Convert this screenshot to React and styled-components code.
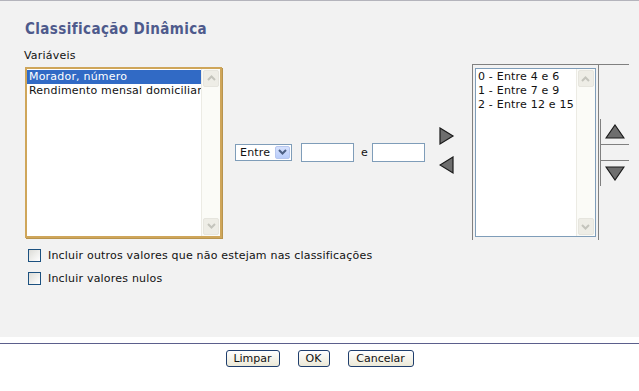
import styled, { createGlobalStyle } from "styled-components";

const GlobalStyle = createGlobalStyle`
  html, body {
    margin: 0;
    padding: 0;
    background: #ffffff;
  }
  body {
    font-family: "DejaVu Sans", Verdana, sans-serif;
    font-size: 11px;
    letter-spacing: 0.2px;
    color: #111;
  }
`;

const Page = styled.div`
  width: 639px;
  height: 391px;
  display: flex;
  flex-direction: column;
`;

const Form = styled.div`
  height: 337px;
  box-sizing: border-box;
  background: #f2f2f2;
  border-top: 1px solid #b4b4bc;
  padding: 18px 0 0 24px;
`;

const Title = styled.h1`
  margin: 0 0 0 1px;
  font-family: "DejaVu Sans Condensed", "DejaVu Sans", sans-serif;
  font-size: 15px;
  line-height: 20px;
  font-weight: bold;
  color: #4e5a8c;
  letter-spacing: 0.4px;
`;

const Label = styled.div`
  margin-top: 10px;
  line-height: 14px;
`;

const Row = styled.div`
  display: flex;
  align-items: center;
  margin-top: 1px;
`;

const ListBox = styled.div`
  display: flex;
  box-sizing: border-box;
  width: ${(p) => p.$w}px;
  height: ${(p) => p.$h}px;
  background: #fff;
  border: ${(p) => (p.$gold ? "2px solid #cfa65a" : "1px solid #7f9db9")};
  box-shadow: ${(p) => (p.$gold ? "1px 1px 0 #b8944e" : "none")};
`;

const Options = styled.div`
  flex: 1;
  padding-top: 1px;
  overflow: hidden;
`;

const Option = styled.div`
  line-height: 14px;
  padding-left: 2px;
  white-space: nowrap;
  background: ${(p) => (p.$selected ? "#316ac5" : "transparent")};
  color: ${(p) => (p.$selected ? "#fff" : "#111")};
`;

const ScrollTrack = styled.div`
  width: 16px;
  display: flex;
  flex-direction: column;
  justify-content: space-between;
  background: #fbfbf7;
  border-left: 1px solid #ecebe4;
  padding: 1px;
`;

const ScrollBtn = styled.div`
  height: 15px;
  border: 1px solid #e6e5de;
  border-radius: 2px;
  background: #eeede6;
  display: flex;
  align-items: center;
  justify-content: center;
`;

const Middle = styled.div`
  display: flex;
  align-items: center;
  margin-left: 13px;
`;

const Select = styled.div`
  display: flex;
  align-items: center;
  box-sizing: border-box;
  width: 57px;
  height: 17px;
  border: 1px solid #7f9db9;
  background: #fff;
  padding-left: 4px;
  justify-content: space-between;
`;

const SelectBtn = styled.div`
  width: 15px;
  height: 13px;
  margin-right: 1px;
  box-sizing: border-box;
  border: 1px solid #b7c7ef;
  border-radius: 2px;
  background: linear-gradient(#d6e1fd, #b9cdfa);
  display: flex;
  align-items: center;
  justify-content: center;
`;

const Input = styled.div`
  box-sizing: border-box;
  width: 53px;
  height: 19px;
  border: 1px solid #7f9db9;
  background: #fff;
  margin-left: ${(p) => p.$ml}px;
`;

const And = styled.span`
  margin-left: 7px;
`;

const Arrows = styled.div`
  display: flex;
  flex-direction: column;
  gap: 10px;
  margin-left: 14px;
  margin-bottom: 3px;
`;

const Frame = styled.div`
  display: flex;
  box-sizing: border-box;
  width: 157px;
  height: 176px;
  margin-left: 17px;
  border-top: 1px solid #808080;
  border-left: 1px solid #808080;
`;

const FrameCell = styled.div`
  border-right: 1px solid #808080;
  padding: 3px 2px 2px 2px;
`;

const OrderCol = styled.div`
  flex: 1;
  display: flex;
  align-items: center;
  padding-left: 1px;
`;

const OrderBox = styled.div`
  flex: 1;
  border-left: 1px solid #808080;
  display: flex;
  flex-direction: column;
`;

const OrderBtn = styled.div`
  height: 25px;
  display: flex;
  align-items: center;
  justify-content: center;
  border-bottom: ${(p) => (p.$top ? "1px solid #808080" : "none")};
  border-top: ${(p) => (p.$top ? "none" : "1px solid #808080")};
  margin-top: ${(p) => (p.$top ? 0 : 15)}px;
`;

const Checks = styled.div`
  margin-top: 9px;
  margin-left: 4px;
  display: flex;
  flex-direction: column;
  gap: 10px;
`;

const CheckRow = styled.label`
  display: flex;
  align-items: center;
  gap: 7px;
  line-height: 13px;
`;

const Box = styled.span`
  width: 13px;
  height: 13px;
  box-sizing: border-box;
  border: 1px solid #1c5180;
  background: linear-gradient(135deg, #dcdcd7, #ffffff);
`;

const Footer = styled.div`
  margin-top: 6px;
  border-top: 1px solid #5b5f8c;
  display: flex;
  justify-content: center;
  gap: 18px;
  padding-top: 6px;
`;

const Button = styled.button`
  box-sizing: border-box;
  height: 17px;
  min-width: ${(p) => p.$w}px;
  padding: 0 3px;
  font-family: "DejaVu Sans", Verdana, sans-serif;
  font-size: 11px;
  color: #111;
  border: 1px solid #1f3e6d;
  border-radius: 3px;
  background: linear-gradient(#ffffff, #ece9d8);
`;

const Chevron = ({ up, color = "#c4c4bc" }) => (
  <svg width="9" height="6" viewBox="0 0 9 6">
    <path
      d={up ? "M1 5 L4.5 1.5 L8 5" : "M1 1 L4.5 4.5 L8 1"}
      fill="none"
      stroke={color}
      strokeWidth="2"
    />
  </svg>
);

const Scrollbar = () => (
  <ScrollTrack>
    <ScrollBtn>
      <Chevron up />
    </ScrollBtn>
    <ScrollBtn>
      <Chevron />
    </ScrollBtn>
  </ScrollTrack>
);

const Tri = ({ dir }) => {
  const pts = {
    right: "1,1 14,9 1,17",
    left: "14,1 1,9 14,17",
  }[dir];
  return (
    <svg width="16" height="19" viewBox="0 0 16 19">
      <polygon points={pts} fill="#6e6e6e" stroke="#1a1a1a" strokeWidth="1.2" />
    </svg>
  );
};

const VTri = ({ dir }) => (
  <svg width="20" height="15" viewBox="0 0 20 15">
    <polygon
      points={dir === "up" ? "10,1 19,14 1,14" : "1,1 19,1 10,14"}
      fill="#6e6e6e"
      stroke="#1a1a1a"
      strokeWidth="1.2"
    />
  </svg>
);

const classes = ["0 - Entre 4 e 6", "1 - Entre 7 e 9", "2 - Entre 12 e 15"];

export default function App() {
  return (
    <Page>
      <GlobalStyle />
      <Form>
        <Title>Classificação Dinâmica</Title>
        <Label>Variáveis</Label>
        <Row>
          <ListBox $gold $w={197} $h={171} style={{ marginLeft: 1 }}>
            <Options>
              <Option $selected>Morador, número</Option>
              <Option>Rendimento mensal domiciliar</Option>
            </Options>
            <Scrollbar />
          </ListBox>
          <Middle>
            <Select>
              <span>Entre</span>
              <SelectBtn>
                <Chevron color="#4d6185" />
              </SelectBtn>
            </Select>
            <Input $ml={9} />
            <And>e</And>
            <Input $ml={4} />
          </Middle>
          <Arrows>
            <Tri dir="right" />
            <Tri dir="left" />
          </Arrows>
          <Frame>
            <FrameCell>
              <ListBox $w={121} $h={169}>
                <Options>
                  {classes.map((c) => (
                    <Option key={c}>{c}</Option>
                  ))}
                </Options>
                <Scrollbar />
              </ListBox>
            </FrameCell>
            <OrderCol>
              <OrderBox>
                <OrderBtn $top>
                  <VTri dir="up" />
                </OrderBtn>
                <OrderBtn>
                  <VTri dir="down" />
                </OrderBtn>
              </OrderBox>
            </OrderCol>
          </Frame>
        </Row>
        <Checks>
          <CheckRow>
            <Box />
            Incluir outros valores que não estejam nas classificações
          </CheckRow>
          <CheckRow>
            <Box />
            Incluir valores nulos
          </CheckRow>
        </Checks>
      </Form>
      <Footer>
        <Button $w={54}>Limpar</Button>
        <Button $w={32}>OK</Button>
        <Button $w={66}>Cancelar</Button>
      </Footer>
    </Page>
  );
}
